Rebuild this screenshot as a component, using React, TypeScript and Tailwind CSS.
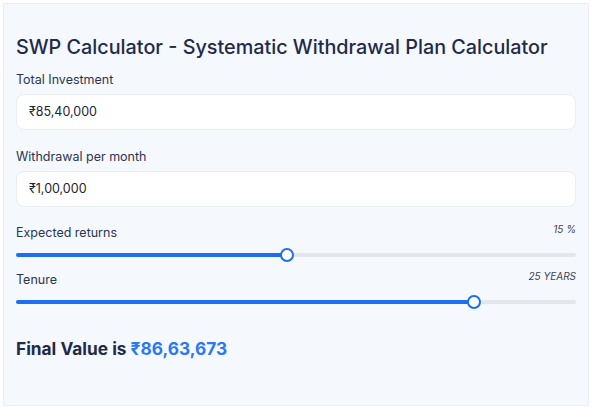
import React from 'react';

const font = { fontFamily: 'Inter, "Noto Sans", sans-serif' };

function Slider({ fill }: { fill: string }) {
  // fill is a static class for the filled width
  return (
    <div className="relative h-[14px] flex items-center">
      <div className="w-full h-[4px] rounded-full bg-[#e3e6ec]" />
      <div className={`absolute left-0 h-[4px] rounded-full bg-[#1d6ff2] ${fill}`} />
      <div
        className={`absolute w-[14px] h-[14px] -ml-[7px] rounded-full bg-white border-[2.5px] border-[#1d6ff2] ${
          fill === 'w-[271px]' ? 'left-[271px]' : 'left-[458px]'
        }`}
      />
    </div>
  );
}

export default function App() {
  return (
    <div className="w-[598px] h-[413px] bg-white pt-[3px] pl-[3px]" style={font}>
      <div className="w-[586px] h-[403px] bg-[#f5f8fd] border border-[#eaedf2] px-[12px] pt-[31px]">
        <h1 className="text-[19.8px] leading-[24px] font-medium text-[#1f2b47] whitespace-nowrap">
          SWP Calculator - Systematic Withdrawal Plan Calculator
        </h1>

        <label className="block mt-[13px] text-[12.5px] leading-[16px] text-[#2b3550]">
          Total Investment
        </label>
        <div className="mt-[6px] h-[36px] w-[560px] bg-white rounded-[8px] border border-[#e9ecf1] flex items-center px-[12px] text-[12.5px] text-[#1e2433]">
          ₹85,40,000
        </div>

        <label className="block mt-[19px] text-[12.5px] leading-[16px] text-[#2b3550]">
          Withdrawal per month
        </label>
        <div className="mt-[6px] h-[36px] w-[560px] bg-white rounded-[8px] border border-[#e9ecf1] flex items-center px-[12px] text-[12.5px] text-[#1e2433]">
          ₹1,00,000
        </div>

        <div className="mt-[18px] w-[560px] flex justify-between items-start h-[16px]">
          <span className="text-[12.5px] leading-[16px] text-[#2b3550]">Expected returns</span>
          <span className="text-[10px] leading-[11px] italic text-[#3a4255] -mt-[1px]">15 %</span>
        </div>
        <div className="mt-[7px] w-[560px]">
          <Slider fill="w-[271px]" />
        </div>

        <div className="mt-[10px] w-[560px] flex justify-between items-start h-[16px]">
          <span className="text-[12.5px] leading-[16px] text-[#2b3550]">Tenure</span>
          <span className="text-[10px] leading-[11px] italic text-[#3a4255] -mt-[1px]">25 YEARS</span>
        </div>
        <div className="mt-[7px] w-[560px]">
          <Slider fill="w-[458px]" />
        </div>

        <p className="mt-[28px] text-[17.3px] leading-[24px] font-bold text-[#1f2b47]">
          Final Value is <span className="text-[#2a78f2]">₹86,63,673</span>
        </p>
      </div>
    </div>
  );
}
